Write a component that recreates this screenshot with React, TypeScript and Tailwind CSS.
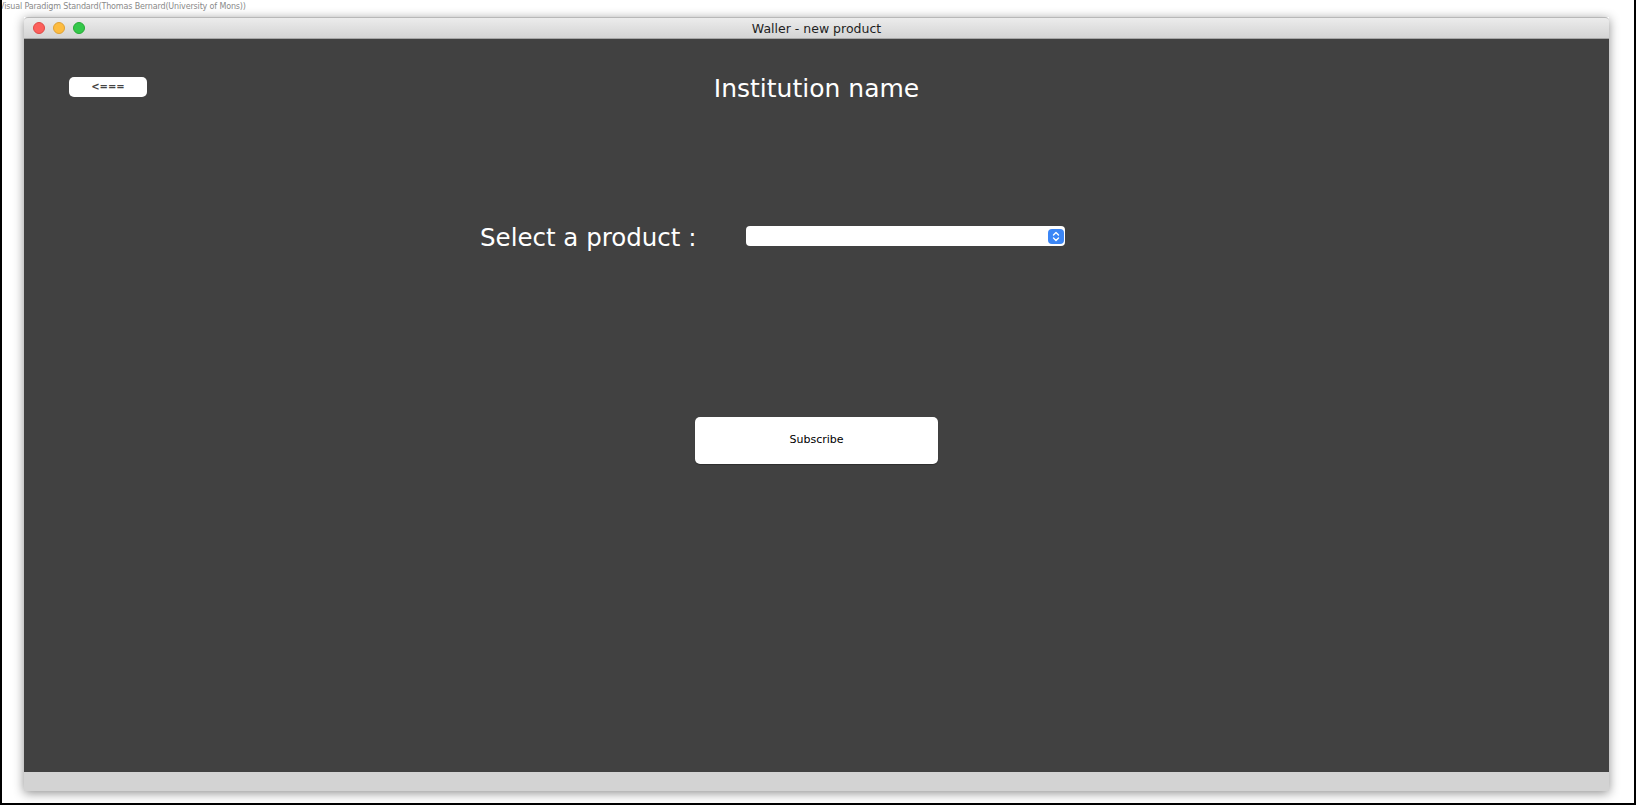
import React from 'react';

const font = { fontFamily: '"DejaVu Sans", "Lucida Grande", sans-serif' };

const TrafficLights = () => (
  <div className="flex items-center gap-[8px] pl-[9px]">
    <span className="w-[12px] h-[12px] rounded-full bg-[#fc605c] border border-[#de4a46]" />
    <span className="w-[12px] h-[12px] rounded-full bg-[#fdbc40] border border-[#dea236]" />
    <span className="w-[12px] h-[12px] rounded-full bg-[#34c84a] border border-[#27aa35]" />
  </div>
);

const Stepper = () => (
  <div className="w-[16px] h-[15px] rounded-[4px] bg-[#3b86f6] flex items-center justify-center">
    <svg width="8" height="11" viewBox="0 0 8 11" fill="none" stroke="white" strokeWidth="1.4" strokeLinecap="round" strokeLinejoin="round">
      <path d="M1.5 4 L4 1.5 L6.5 4" />
      <path d="M1.5 7 L4 9.5 L6.5 7" />
    </svg>
  </div>
);

export default function App() {
  return (
    <div className="w-[1636px] h-[805px] bg-white border-x-2 border-b-2 border-black flex flex-col overflow-hidden" style={font}>
      {/* tool watermark */}
      <div className="h-[17px] -ml-[3px] pt-[1px] text-[8px] tracking-[-0.15px] leading-[12px] text-[#8a8a8a] whitespace-nowrap">
        Visual Paradigm Standard(Thomas Bernard(University of Mons))
      </div>

      <div className="ml-[22px] w-[1585px] flex flex-col shadow-[0_2px_10px_rgba(0,0,0,0.45)]">
        {/* title bar */}
        <div className="h-[22px] rounded-t-[4px] border-t border-[#b8b8b8] border-b border-b-[#a6a6a6] bg-gradient-to-b from-[#ececec] to-[#d4d4d4] grid grid-cols-[1fr_auto_1fr] items-center">
          <TrafficLights />
          <div className="pt-[2px] text-[12.5px] text-[#1e1e1e] leading-none">Waller - new product</div>
          <div />
        </div>

        {/* content */}
        <div className="h-[733px] bg-[#414141] flex flex-col">
          <div className="pt-[37px] grid grid-cols-[1fr_auto_1fr] items-start">
            <div>
              <button className="mt-[1px] ml-[45px] w-[78px] h-[20px] rounded-[5px] bg-white text-[10px] font-semibold text-[#444] flex items-center justify-center leading-none">
                &lt;===
              </button>
            </div>
            <h1 className="text-[25px] leading-[26px] text-white font-normal">Institution name</h1>
            <div />
          </div>

          <div className="mt-[121px] ml-[456px] h-[30px] flex items-start">
            <label className="text-[24.5px] leading-[30px] text-white w-[266px]">Select a product :</label>
            <div className="mt-[3px] w-[319px] h-[20px] rounded-[4px] bg-white flex items-center justify-end pr-[1px]">
              <Stepper />
            </div>
          </div>

          <button className="mt-[164px] self-center w-[243px] h-[47px] rounded-[5px] bg-white text-[11px] text-black flex items-center justify-center shadow-[0_1px_1px_rgba(0,0,0,0.3)]">
            Subscribe
          </button>
        </div>

        {/* footer strip */}
        <div className="h-[19px] bg-[#d3d3d3]" />
      </div>
    </div>
  );
}
